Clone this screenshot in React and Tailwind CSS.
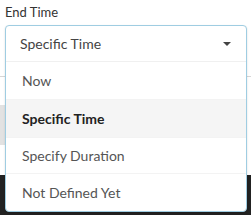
import React from "react";

export default function App() {
  const options = [
    { label: "Now", h: "h-[38px]" },
    { label: "Specific Time", h: "h-[38px]", selected: true },
    { label: "Specify Duration", h: "h-[36px]" },
    { label: "Not Defined Yet", h: "h-[37px]" },
  ];
  return (
    <div
      className="relative w-[251px] h-[215px] overflow-hidden bg-white"
      style={{ fontFamily: "Lato, 'Open Sans', sans-serif" }}
    >
      {/* page behind the open menu */}
      <div className="flex flex-col h-full">
        <div className="h-[77px] border-b border-[#d6d6d6]" />
        <div className="h-[28px]" />
        <div className="h-[40px] w-[6px] bg-[#e2e2e2]" />
        <div className="h-[30px]" />
        <div className="flex-1 bg-[#222222]" />
      </div>

      {/* label */}
      <div className="absolute left-[5px] top-[3px] text-[13px] leading-[18px] text-[#333333]">
        End Time
      </div>

      {/* select + open menu */}
      <div className="absolute left-[5px] top-[25px] w-[242px] rounded-[4px] border border-[#9fcde2] bg-white shadow-[0_1px_2px_rgba(0,0,0,0.15)]">
        <div className="flex h-[36px] items-center justify-between border-b border-[#f0f0f0] pl-[14px] pr-[15px]">
          <span className="text-[14px] text-[#444444]">Specific Time</span>
          <svg width="8" height="4" viewBox="0 0 8 4">
            <path d="M0 0 L8 0 L4 4 Z" fill="#444444" />
          </svg>
        </div>
        {options.map((o, i) => (
          <div
            key={o.label}
            className={
              "flex items-center pl-[16px] text-[14px] " +
              o.h +
              (i < options.length - 1 ? " border-b border-[#f3f3f3]" : "") +
              (o.selected
                ? " bg-[#f5f5f5] font-bold text-[#222222]"
                : " text-[#555555]")
            }
          >
            {o.label}
          </div>
        ))}
      </div>
    </div>
  );
}
